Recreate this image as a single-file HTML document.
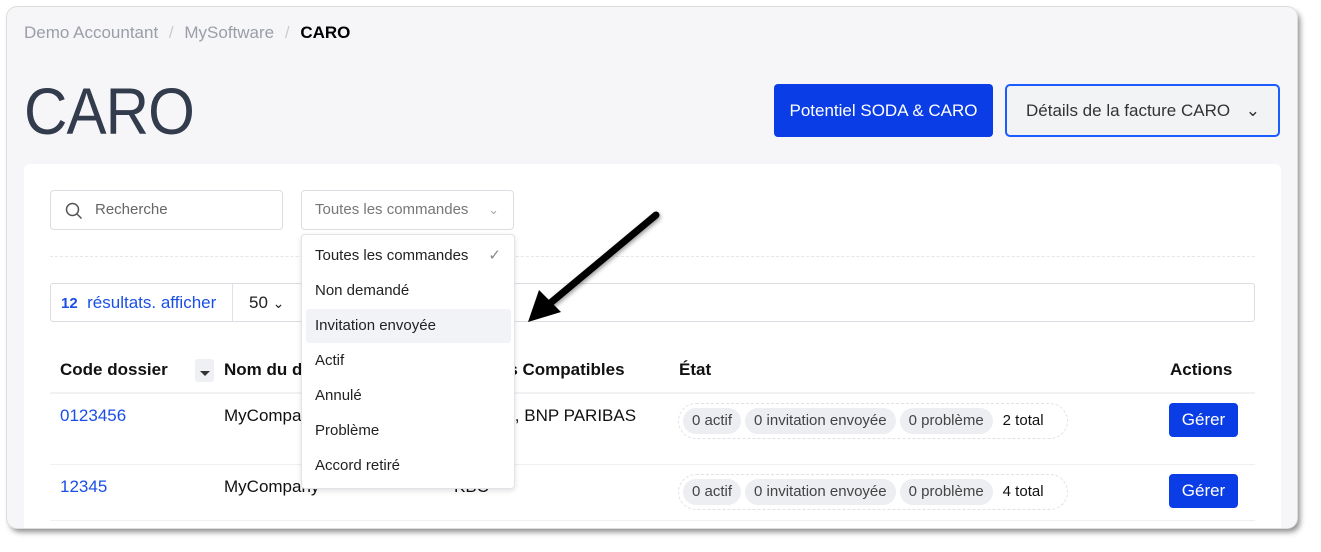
<!DOCTYPE html>
<html><head><meta charset="utf-8"><style>
*{box-sizing:border-box;margin:0;padding:0}
body{width:1321px;height:552px;background:#fff;font-family:"Liberation Sans",sans-serif;position:relative;overflow:hidden;color:#111}
.win{position:absolute;left:7px;top:7px;width:1290px;height:521px;background:#f6f6f8;border-radius:10px;box-shadow:0 0 0 1px #ddd,3px 4px 6px rgba(0,0,0,.45);overflow:hidden}
.a{position:absolute;white-space:nowrap}
.card{position:absolute;left:17px;top:157px;width:1257px;height:400px;background:#fff;border-radius:6px}
.badge{display:inline-block;background:#eceef2;border-radius:13px;height:26px;line-height:26px;padding:0 9px;font-size:15px;color:#444;margin-right:4px}
.grp{position:absolute;height:36px;width:390px;border:1px dashed #e2e2e6;border-radius:18px;padding:4px 0 0 4px}
.btn{position:absolute;background:#0a3de6;color:#fff;border-radius:4px;font-size:17px;text-align:center}
.mi{position:absolute;left:4px;width:205px;height:34px;line-height:34px;padding-left:9px;font-size:15px;color:#222;border-radius:3px}
</style></head><body>
<div class="win">
<div class="a" style="left:17px;top:16px;font-size:17px;color:#9a9ea8">Demo Accountant <span style="color:#ccc;margin:0 6px">/</span> MySoftware <span style="color:#ccc;margin:0 6px">/</span> <b style="color:#000">CARO</b></div>
<div class="a" style="left:17px;top:66px;font-size:66px;color:#333c4d;letter-spacing:-1px;transform:scaleX(0.91);transform-origin:left">CARO</div>
<div class="btn" style="left:767px;top:77px;width:219px;height:53px;line-height:53px">Potentiel SODA &amp; CARO</div>
<div class="a" style="left:998px;top:77px;width:275px;height:53px;border:2px solid #1a5cff;border-radius:5px;background:#f2f3f5;font-size:17px;color:#333;line-height:49px;padding-left:19px">Détails de la facture CARO<span style="position:absolute;right:18px;top:0">&#8964;</span></div>
<div class="card">
<div class="a" style="left:26px;top:26px;width:233px;height:40px;border:1px solid #dcdde2;border-radius:4px;font-size:15px;color:#666;line-height:38px;padding-left:44px">Recherche
<svg style="position:absolute;left:14px;top:11px" width="18" height="18" viewBox="0 0 18 18"><circle cx="7.5" cy="7.5" r="6" fill="none" stroke="#555" stroke-width="1.5"/><path d="M12 12l4.5 4.5" stroke="#555" stroke-width="1.5"/></svg></div>
<div class="a" style="left:277px;top:26px;width:213px;height:40px;border:1px solid #dcdde2;border-radius:4px;font-size:15px;color:#777;line-height:38px;padding-left:13px">Toutes les commandes <span style="position:absolute;right:14px;color:#aaa;font-size:13px">&#8964;</span></div>
<div class="a" style="left:26px;top:92px;width:1205px;border-top:1px dashed #e6e6ea"></div>
<div class="a" style="left:26px;top:119px;width:1205px;height:39px;border:1px solid #dcdde2;border-radius:3px"></div>
<div class="a" style="left:37px;top:129px;font-size:17px;color:#1a4fe6"><b style="font-size:15px">12</b>&nbsp; résultats. afficher</div>
<div class="a" style="left:208px;top:120px;height:37px;border-left:1px solid #e2e2e6"></div>
<div class="a" style="left:225px;top:129px;font-size:17px;color:#222">50 <span style="font-size:14px">&#8964;</span></div>
<div class="a" style="left:36px;top:196px;font-size:17px;font-weight:bold">Code dossier</div>
<div class="a" style="left:171px;top:195px;width:19px;height:23px;background:#eef0f3;border-radius:3px"><div style="position:absolute;left:5px;top:12px;border:5px solid transparent;border-top:5px solid #333"></div></div>
<div class="a" style="left:200px;top:196px;font-size:17px;font-weight:bold">Nom du dossier</div>
<div class="a" style="left:422px;top:196px;font-size:17px;font-weight:bold">Banques Compatibles</div>
<div class="a" style="left:655px;top:196px;font-size:17px;font-weight:bold">État</div>
<div class="a" style="left:1146px;top:196px;font-size:17px;font-weight:bold">Actions</div>
<div class="a" style="left:26px;top:228px;width:1205px;border-top:2px solid #f2f2f4"></div>
<div class="a" style="left:36px;top:242px;font-size:17px;color:#1a4fe6">0123456</div>
<div class="a" style="left:200px;top:242px;font-size:17px">MyCompany</div>
<div class="a" style="left:379px;top:242px;font-size:17px">BNP PARIBAS, BNP PARIBAS</div>
<div class="grp" style="left:654px;top:239px"><span class="badge">0 actif</span><span class="badge">0 invitation envoyée</span><span class="badge">0 problème</span><span style="font-size:15px;margin-left:6px">2 total</span></div>
<div class="btn" style="left:1145px;top:239px;width:69px;height:34px;line-height:34px">Gérer</div>
<div class="a" style="left:26px;top:300px;width:1205px;border-top:1px solid #f0f0f2"></div>
<div class="a" style="left:36px;top:313px;font-size:17px;color:#1a4fe6">12345</div>
<div class="a" style="left:200px;top:313px;font-size:17px">MyCompany</div>
<div class="a" style="left:430px;top:313px;font-size:17px">KBC</div>
<div class="grp" style="left:654px;top:310px"><span class="badge">0 actif</span><span class="badge">0 invitation envoyée</span><span class="badge">0 problème</span><span style="font-size:15px;margin-left:6px">4 total</span></div>
<div class="btn" style="left:1145px;top:310px;width:69px;height:34px;line-height:34px">Gérer</div>
<div class="a" style="left:26px;top:356px;width:1205px;border-top:1px solid #f0f0f2"></div>
</div>
<div class="a" style="left:294px;top:227px;width:214px;height:255px;background:#fff;border:1px solid #e2e3e8;border-radius:4px;box-shadow:0 2px 6px rgba(0,0,0,.12)">
<div class="mi" style="top:4px">Toutes les commandes <span style="position:absolute;right:10px;color:#888">&#10003;</span></div>
<div class="mi" style="top:39px">Non demandé</div>
<div class="mi" style="top:74px;background:#f1f3f7">Invitation envoyée</div>
<div class="mi" style="top:109px">Actif</div>
<div class="mi" style="top:144px">Annulé</div>
<div class="mi" style="top:179px">Problème</div>
<div class="mi" style="top:214px">Accord retiré</div>
</div>
</div>
<svg class="a" style="left:0;top:0" width="1321" height="552"><path d="M656 215L548 305" stroke="#000" stroke-width="7" stroke-linecap="round" filter="drop-shadow(1px 2px 2px rgba(0,0,0,.4))"/><path d="M528 322L539 290L561 312Z" fill="#000"/></svg>
</body></html>
